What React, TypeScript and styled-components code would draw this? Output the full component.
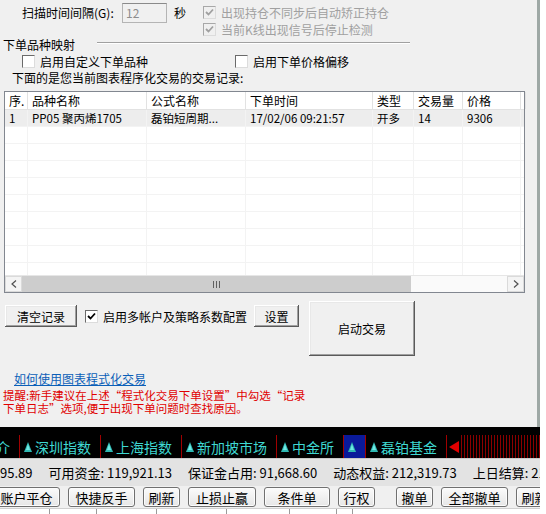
import styled, { createGlobalStyle } from "styled-components";

const GlobalStyle = createGlobalStyle`
  html, body {
    margin: 0;
    padding: 0;
    background: #ffffff;
  }
  body {
    font-family: "Noto Sans CJK SC", "Liberation Sans", sans-serif;
    font-size: 12px;
    color: #000;
  }
`;

const CJK = `"Noto Sans CJK SC", "Liberation Sans", sans-serif`;

const Screen = styled.div`
  width: 540px;
  height: 514px;
  overflow: hidden;
  display: flex;
  flex-direction: column;
  font-family: ${CJK};
`;

const Dialog = styled.div`
  flex: none;
  width: 537px;
  height: 427px;
  background: #f0f0f0;
  border-right: 3px solid #9ea8a5;
  display: flex;
  flex-direction: column;
  overflow: hidden;
`;

const Header = styled.div`
  height: 37px;
  display: flex;
  padding: 3px 0 0 22px;
  box-sizing: border-box;
`;

const FieldLabel = styled.span`
  width: 100px;
  line-height: 20px;
  font-size: 12px;
`;

const NumInput = styled.div`
  width: 45px;
  height: 20px;
  box-sizing: border-box;
  border: 1px solid #b4b4b4;
  border-top-color: #8a8a8a;
  background: #f0f0f0;
  color: #8d8d8d;
  font-size: 12px;
  line-height: 18px;
  padding-left: 3px;
`;

const Unit = styled.span`
  margin-left: 7px;
  line-height: 20px;
`;

const CheckColumn = styled.div`
  margin-left: 17px;
  margin-top: 1px;
  display: flex;
  flex-direction: column;
`;

const CheckRow = styled.label<{ $dim?: boolean; $h?: number }>`
  display: flex;
  align-items: center;
  gap: 5px;
  height: ${(p) => p.$h ?? 18}px;
  color: ${(p) => (p.$dim ? "#a0a0a0" : "#000")};
  font-size: 12px;
  white-space: nowrap;
`;

const Box = styled.span<{ $dim?: boolean }>`
  flex: none;
  width: 13px;
  height: 13px;
  box-sizing: border-box;
  border-top: 1px solid ${(p) => (p.$dim ? "#a8a8a8" : "#6a6a6a")};
  border-left: 1px solid ${(p) => (p.$dim ? "#a8a8a8" : "#6a6a6a")};
  border-right: 1px solid #dcdcdc;
  border-bottom: 1px solid #dcdcdc;
  background: ${(p) => (p.$dim ? "#f0f0f0" : "#ffffff")};
  display: flex;
  align-items: center;
  justify-content: center;
`;

function Check({ checked, dim }: { checked?: boolean; dim?: boolean }) {
  return (
    <Box $dim={dim}>
      {checked && (
        <svg width="9" height="9" viewBox="0 0 9 9">
          <path
            d="M1 4 L3.5 6.5 L8 1.5"
            fill="none"
            stroke={dim ? "#a0a0a0" : "#000"}
            strokeWidth="1.8"
          />
        </svg>
      )}
    </Box>
  );
}

const GroupTitle = styled.div`
  height: 14px;
  display: flex;
  align-items: center;
  padding-left: 3px;
`;

const GroupText = styled.span`
  width: 94px;
  font-size: 12px;
`;

const GroupLine = styled.span`
  width: 313px;
  height: 1px;
  background: #a0a0a0;
  border-bottom: 1px solid #ffffff;
  margin-top: -2px;
`;

const OptionRow = styled.div`
  margin-top: 2px;
  height: 16px;
  display: flex;
  padding-left: 22px;
`;

const OptionCell = styled.div<{ $w?: number }>`
  width: ${(p) => (p.$w ? `${p.$w}px` : "auto")};
`;

const Caption = styled.div`
  height: 16px;
  line-height: 16px;
  padding-left: 12px;
  margin-top: 1px;
`;

const Table = styled.div`
  margin: 5px 0 0 4px;
  width: 521px;
  height: 202px;
  box-sizing: border-box;
  border: 1px solid #828790;
  background: #ffffff;
  display: flex;
  flex-direction: column;
`;

const cols = [23, 119, 99, 127, 41, 49, 58, 3];

const HeadRow = styled.div`
  display: flex;
  height: 18px;
  flex: none;
  border-bottom: 1px solid #e2e2e2;
  box-sizing: border-box;
`;

const HeadCell = styled.div<{ $w: number }>`
  width: ${(p) => p.$w}px;
  flex: none;
  box-sizing: border-box;
  border-right: 1px solid #e2e2e2;
  padding-left: 4px;
  line-height: 17px;
  font-size: 12px;
  white-space: nowrap;
  overflow: hidden;
`;

const Body = styled.div`
  flex: 1;
  overflow: hidden;
`;

const DataRow = styled.div<{ $sel?: boolean }>`
  display: flex;
  height: 17px;
  background: ${(p) => (p.$sel ? "#ededed" : "#ffffff")};
  border-bottom: 1px solid #f3f3f3;
  box-sizing: border-box;
`;

const DataCell = styled.div<{ $w: number }>`
  width: ${(p) => p.$w}px;
  flex: none;
  box-sizing: border-box;
  border-right: 1px solid #f3f3f3;
  padding-left: 4px;
  line-height: 16px;
  font-size: 11.5px;
  white-space: nowrap;
  overflow: hidden;
`;

const HScroll = styled.div`
  flex: none;
  height: 17px;
  display: flex;
  background: #fafafa;
  border-top: 1px solid #e6e6e6;
  box-sizing: border-box;
`;

const ScrollBtn = styled.div`
  width: 17px;
  flex: none;
  display: flex;
  align-items: center;
  justify-content: center;
  background: #f4f4f4;
  border: 1px solid #dadada;
  box-sizing: border-box;
`;

const Thumb = styled.div`
  width: 389px;
  flex: none;
  background: #cdcdcd;
  display: flex;
  align-items: center;
  justify-content: center;
  gap: 2px;
`;

const Grip = styled.span`
  width: 1px;
  height: 7px;
  background: #606060;
`;

const Track = styled.div`
  flex: 1;
`;

const ActionArea = styled.div`
  margin-top: 8px;
  height: 55px;
  display: flex;
  padding-left: 5px;
`;

const LeftActions = styled.div`
  display: flex;
  align-items: center;
  height: 22px;
  margin-top: 4px;
`;

const ClassicBtn = styled.div<{ $w: number; $h: number }>`
  width: ${(p) => p.$w}px;
  height: ${(p) => p.$h}px;
  flex: none;
  box-sizing: border-box;
  background: #f0f0f0;
  box-shadow: inset -1px -1px #5a5a5a, inset 1px 1px #ffffff,
    inset -2px -2px #a0a0a0, inset 2px 2px #e8e8e8;
  display: flex;
  align-items: center;
  justify-content: center;
  font-size: 12px;
`;

const MultiCheck = styled.div`
  margin: 0 7px 0 8px;
  display: flex;
  align-items: center;
  gap: 5px;
  white-space: nowrap;
  font-size: 12px;
`;

const BigSlot = styled.div`
  margin-left: 10px;
`;

const HelpLink = styled.div`
  margin: 15px 0 0 14px;
  height: 15px;
  line-height: 15px;
  color: #0b5fb8;
  text-decoration: underline;
  font-size: 12px;
`;

const Warning = styled.div`
  margin: 3px 0 0 3px;
  color: #e00000;
  font-size: 11.5px;
  line-height: 13px;
  white-space: nowrap;
`;

const Ticker = styled.div`
  flex: none;
  height: 31px;
  background: #000000;
  padding-top: 8px;
  box-sizing: border-box;
  display: flex;
  overflow: hidden;
`;

const TickItem = styled.div<{ $first?: boolean; $active?: boolean }>`
  flex: none;
  height: 23px;
  display: flex;
  align-items: center;
  gap: 3px;
  padding: 0 9px 0 4px;
  margin-left: ${(p) => (p.$first ? "-8px" : "0")};
  border-right: 1px solid #a00000;
  background: ${(p) => (p.$active ? "#0a1a9a" : "transparent")};
  color: #3fd8d2;
  font-size: 14px;
  white-space: nowrap;
`;

const Stripes = styled.div`
  flex: 1;
  height: 23px;
  display: flex;
  align-items: center;
  padding-left: 2px;
  gap: 2px;
`;

const StripeFill = styled.div`
  flex: 1;
  height: 23px;
  background: repeating-linear-gradient(
    90deg,
    #8a0000 0px,
    #8a0000 1px,
    #000 1px,
    #000 3px
  );
`;

function Tri() {
  return (
    <svg width="8" height="10" viewBox="0 0 8 10">
      <polygon points="4,0 8,10 0,10" fill="#2fb8b2" />
      <polygon points="4,2 6,8 2,8" fill="#6fe8e2" />
    </svg>
  );
}

const InfoBar = styled.div`
  flex: none;
  height: 28px;
  background: #e3e3e3;
  border-top: 1px solid #c8c8c8;
  box-sizing: border-box;
  display: flex;
  align-items: center;
  gap: 16px;
  font-size: 13px;
  white-space: nowrap;
  overflow: hidden;
`;

const ButtonBar = styled.div`
  flex: none;
  height: 22px;
  background: #f0f0f0;
  display: flex;
  align-items: center;
  gap: 8px;
  overflow: hidden;
`;

const ToolBtn = styled.div<{ $w: number; $first?: boolean; $gapBefore?: number }>`
  flex: none;
  width: ${(p) => p.$w}px;
  height: 20px;
  box-sizing: border-box;
  margin-left: ${(p) => (p.$first ? "-7px" : p.$gapBefore ? `${p.$gapBefore}px` : "0")};
  border: 1px solid #707070;
  border-radius: 3px;
  background: linear-gradient(#fbfbfb, #e6e6e6);
  box-shadow: inset 0 0 0 1px #fcfcfc;
  display: flex;
  align-items: center;
  justify-content: center;
  font-size: 13px;
  white-space: nowrap;
`;

const TabStrip = styled.div`
  flex: 1;
  display: flex;
  background: #ffffff;
  border-top: 1px solid #d0d0d0;
`;

const TabCell = styled.div<{ $w: number }>`
  flex: none;
  width: ${(p) => p.$w}px;
  border-right: 1px solid #9a9a9a;
  box-sizing: border-box;
`;

const rows = [
  ["1", "PP05 聚丙烯1705", "磊铂短周期...", "17/02/06 09:21:57", "开多", "14", "9306", ""],
];

export default function App() {
  const heads = ["序.", "品种名称", "公式名称", "下单时间", "类型", "交易量", "价格", ""];
  const empty = Array.from({ length: 9 });
  return (
    <>
      <GlobalStyle />
      <Screen>
        <Dialog>
          <Header>
            <FieldLabel>扫描时间间隔(G):</FieldLabel>
            <NumInput>12</NumInput>
            <Unit>秒</Unit>
            <CheckColumn>
              <CheckRow $dim>
                <Check checked dim />
                出现持仓不同步后自动矫正持仓
              </CheckRow>
              <CheckRow $dim>
                <Check checked dim />
                当前K线出现信号后停止检测
              </CheckRow>
            </CheckColumn>
          </Header>

          <GroupTitle>
            <GroupText>下单品种映射</GroupText>
            <GroupLine />
          </GroupTitle>

          <OptionRow>
            <OptionCell $w={213}>
              <CheckRow $h={16}>
                <Check />
                启用自定义下单品种
              </CheckRow>
            </OptionCell>
            <OptionCell>
              <CheckRow $h={16}>
                <Check />
                启用下单价格偏移
              </CheckRow>
            </OptionCell>
          </OptionRow>

          <Caption>下面的是您当前图表程序化交易的交易记录:</Caption>

          <Table>
            <HeadRow>
              {heads.map((h, i) => (
                <HeadCell key={i} $w={cols[i]}>
                  {h}
                </HeadCell>
              ))}
            </HeadRow>
            <Body>
              {rows.map((r, ri) => (
                <DataRow key={ri} $sel>
                  {r.map((c, ci) => (
                    <DataCell key={ci} $w={cols[ci]}>
                      {c}
                    </DataCell>
                  ))}
                </DataRow>
              ))}
              {empty.map((_, ri) => (
                <DataRow key={`e${ri}`}>
                  {cols.map((w, ci) => (
                    <DataCell key={ci} $w={w} />
                  ))}
                </DataRow>
              ))}
            </Body>
            <HScroll>
              <ScrollBtn>
                <svg width="6" height="8" viewBox="0 0 6 8">
                  <path d="M5 0.5 L1 4 L5 7.5" fill="none" stroke="#505050" strokeWidth="1.2" />
                </svg>
              </ScrollBtn>
              <Thumb>
                <Grip />
                <Grip />
                <Grip />
              </Thumb>
              <Track />
              <ScrollBtn>
                <svg width="6" height="8" viewBox="0 0 6 8">
                  <path d="M1 0.5 L5 4 L1 7.5" fill="none" stroke="#505050" strokeWidth="1.2" />
                </svg>
              </ScrollBtn>
            </HScroll>
          </Table>

          <ActionArea>
            <LeftActions>
              <ClassicBtn $w={72} $h={22}>清空记录</ClassicBtn>
              <MultiCheck>
                <Check checked />
                启用多帐户及策略系数配置
              </MultiCheck>
              <ClassicBtn $w={45} $h={22}>设置</ClassicBtn>
            </LeftActions>
            <BigSlot>
              <ClassicBtn $w={106} $h={55}>启动交易</ClassicBtn>
            </BigSlot>
          </ActionArea>

          <HelpLink>如何使用图表程式化交易</HelpLink>
          <Warning>
            提醒:新手建议在上述“程式化交易下单设置”中勾选“记录
            <br />
            下单日志”选项,便于出现下单问题时查找原因。
          </Warning>
        </Dialog>

        <Ticker>
          <TickItem $first>介</TickItem>
          <TickItem>
            <Tri />
            深圳指数
          </TickItem>
          <TickItem>
            <Tri />
            上海指数
          </TickItem>
          <TickItem>
            <Tri />
            新加坡市场
          </TickItem>
          <TickItem>
            <Tri />
            中金所
          </TickItem>
          <TickItem $active>
            <Tri />
          </TickItem>
          <TickItem>
            <Tri />
            磊铂基金
          </TickItem>
          <Stripes>
            <svg width="10" height="12" viewBox="0 0 10 12">
              <polygon points="0,6 10,0 10,12" fill="#e00000" />
            </svg>
            <StripeFill />
          </Stripes>
        </Ticker>

        <InfoBar>
          <span>95.89</span>
          <span>可用资金: 119,921.13</span>
          <span>保证金占用: 91,668.60</span>
          <span>动态权益: 212,319.73</span>
          <span>上日结算: 212,319.73</span>
        </InfoBar>

        <ButtonBar>
          <ToolBtn $w={67} $first>账户平仓</ToolBtn>
          <ToolBtn $w={67}>快捷反手</ToolBtn>
          <ToolBtn $w={37}>刷新</ToolBtn>
          <ToolBtn $w={68}>止损止赢</ToolBtn>
          <ToolBtn $w={66}>条件单</ToolBtn>
          <ToolBtn $w={37}>行权</ToolBtn>
          <ToolBtn $w={37} $gapBefore={13}>撤单</ToolBtn>
          <ToolBtn $w={67}>全部撤单</ToolBtn>
          <ToolBtn $w={37}>刷新</ToolBtn>
        </ButtonBar>

        <TabStrip>
          <TabCell $w={50} />
          <TabCell $w={47} />
          <TabCell $w={60} />
          <TabCell $w={70} />
          <TabCell $w={63} />
          <TabCell $w={47} />
          <TabCell $w={16} />
        </TabStrip>
      </Screen>
    </>
  );
}
